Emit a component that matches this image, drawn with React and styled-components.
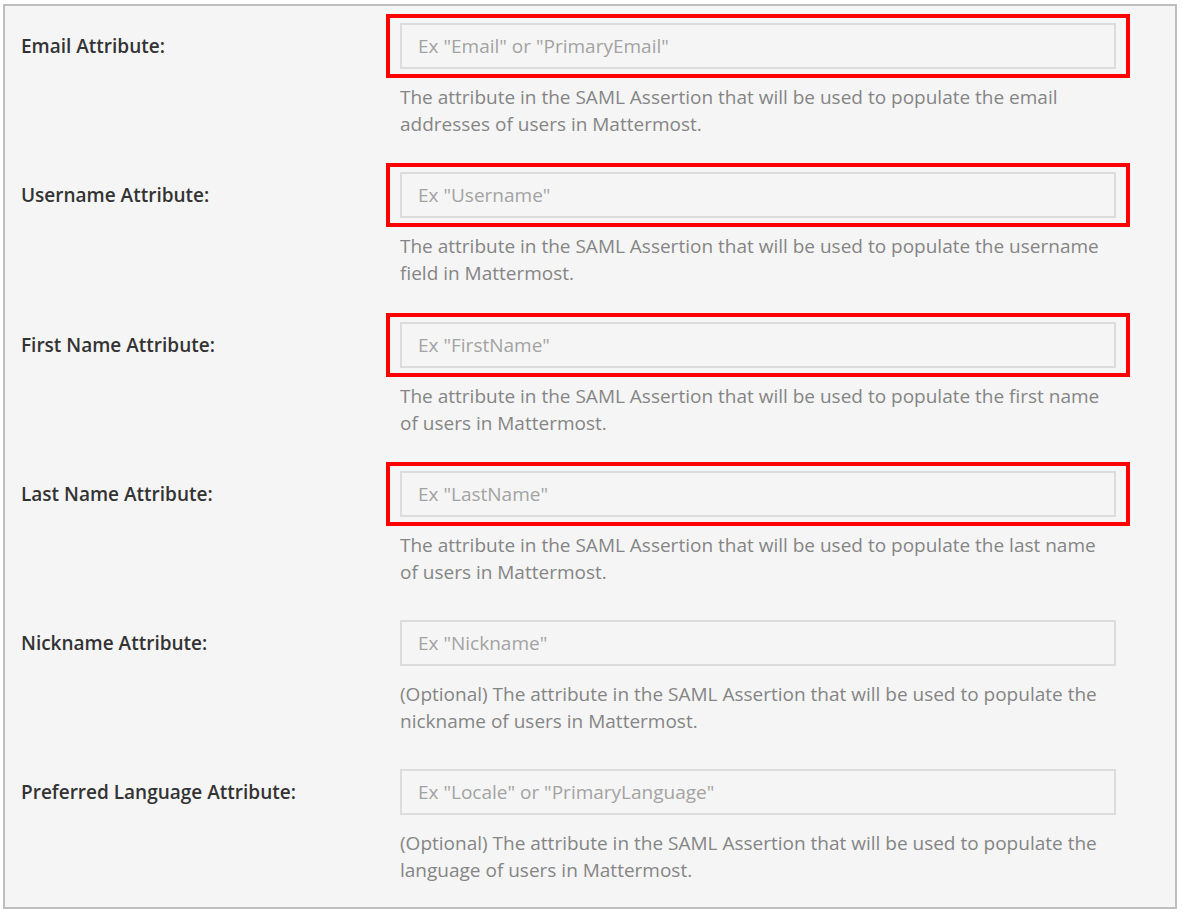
import React from 'react';
import styled, { createGlobalStyle } from 'styled-components';

const GlobalStyle = createGlobalStyle`
  html, body {
    margin: 0;
    padding: 0;
    background: #ffffff;
  }
  body {
    font-family: "Open Sans", "Noto Sans", "Liberation Sans", sans-serif;
  }
`;

const Panel = styled.div`
  margin: 4px 0 0 3px;
  width: 1174px;
  height: 905px;
  box-sizing: border-box;
  border: 2px solid #bfbfbf;
  background: #f5f5f5;
  padding: 8px 45px 0 16px;
  display: flex;
  flex-direction: column;
  gap: 25.3px;
`;

const Row = styled.div`
  display: grid;
  grid-template-columns: 365px 1fr;
  align-items: start;
`;

const Label = styled.label`
  height: 64px;
  display: flex;
  align-items: center;
  font-size: 19px;
  font-weight: 600;
  color: #333333;
`;

const Field = styled.div`
  display: flex;
  flex-direction: column;
`;

const Frame = styled.div`
  border: 4px solid ${(p) => (p.highlight ? '#ff0000' : 'transparent')};
  padding: 5px 10px;
`;

const Input = styled.input`
  display: block;
  width: 100%;
  height: 46px;
  box-sizing: border-box;
  border: 2px solid #dcdcdc;
  background: #f5f5f5;
  padding: 0 16px;
  font-family: inherit;
  font-size: 19px;
  color: #333;
  outline: none;

  &::placeholder {
    color: #a3a3a3;
  }
`;

const Help = styled.div`
  margin: 6px 0 0 14px;
  font-size: 19px;
  line-height: 27px;
  color: #858585;
  max-width: 716px;
`;

const fields = [
  {
    label: 'Email Attribute:',
    placeholder: 'Ex "Email" or "PrimaryEmail"',
    help: 'The attribute in the SAML Assertion that will be used to populate the email addresses of users in Mattermost.',
    highlight: true,
  },
  {
    label: 'Username Attribute:',
    placeholder: 'Ex "Username"',
    help: 'The attribute in the SAML Assertion that will be used to populate the username field in Mattermost.',
    highlight: true,
  },
  {
    label: 'First Name Attribute:',
    placeholder: 'Ex "FirstName"',
    help: 'The attribute in the SAML Assertion that will be used to populate the first name of users in Mattermost.',
    highlight: true,
  },
  {
    label: 'Last Name Attribute:',
    placeholder: 'Ex "LastName"',
    help: 'The attribute in the SAML Assertion that will be used to populate the last name of users in Mattermost.',
    highlight: true,
  },
  {
    label: 'Nickname Attribute:',
    placeholder: 'Ex "Nickname"',
    help: '(Optional) The attribute in the SAML Assertion that will be used to populate the nickname of users in Mattermost.',
  },
  {
    label: 'Preferred Language Attribute:',
    placeholder: 'Ex "Locale" or "PrimaryLanguage"',
    help: '(Optional) The attribute in the SAML Assertion that will be used to populate the language of users in Mattermost.',
  },
];

export default function App() {
  return (
    <>
      <GlobalStyle />
      <Panel>
        {fields.map((f) => (
          <Row key={f.label}>
            <Label>{f.label}</Label>
            <Field>
              <Frame highlight={f.highlight}>
                <Input type="text" placeholder={f.placeholder} />
              </Frame>
              <Help>{f.help}</Help>
            </Field>
          </Row>
        ))}
      </Panel>
    </>
  );
}
